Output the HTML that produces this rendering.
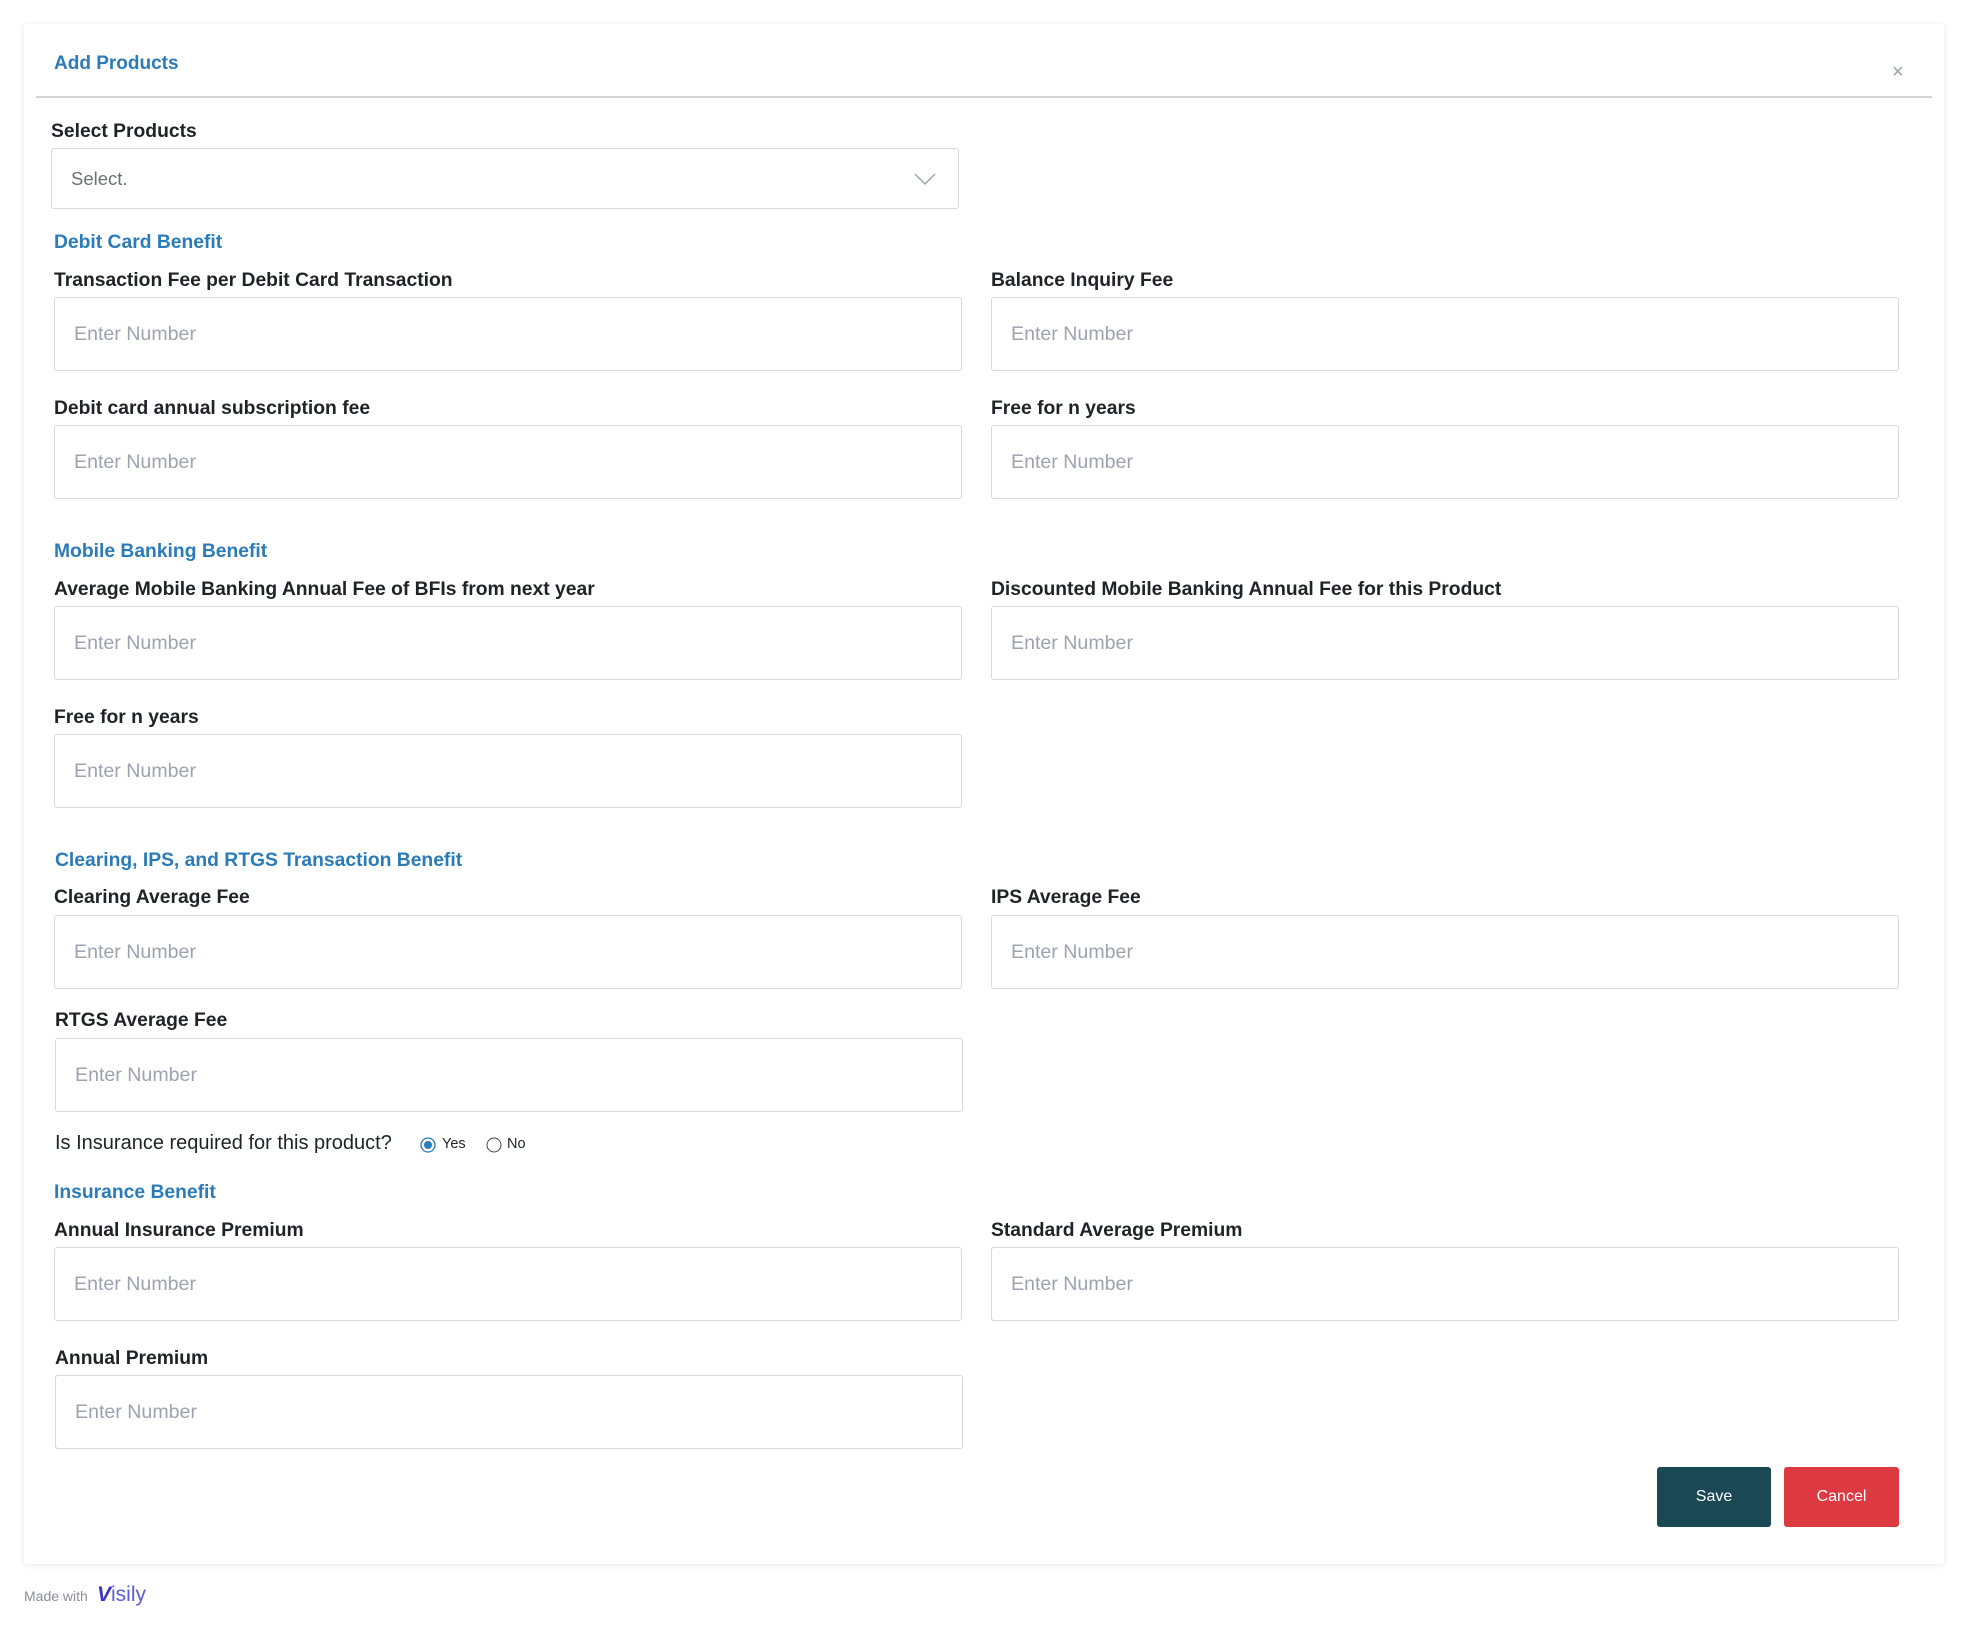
<!DOCTYPE html>
<html><head><meta charset="utf-8"><style>
*{box-sizing:border-box;margin:0;padding:0}
body{width:1968px;height:1628px;background:#fff;font-family:"Liberation Sans",Arial,sans-serif;position:relative;overflow:hidden}
.card{position:absolute;left:24px;top:24px;width:1920px;height:1540px;background:#fff;box-shadow:0 1px 6px rgba(0,0,0,.10)}
.abs{position:absolute}
.title{left:54px;top:53px;font-size:19px;font-weight:bold;color:#2b7bb9}
.x{left:1892px;top:61px;font-size:20px;color:#9aa0a6}
.div{left:36px;top:96px;width:1896px;height:2px;background:#d3d6da}
.lbl{font-size:19.3px;font-weight:bold;color:#1f2328;white-space:nowrap}
.h{font-size:19.3px;font-weight:bold;color:#2b7bb9;white-space:nowrap}
.inp{border:1.5px solid #d6d8db;border-radius:3px;height:74px;font-size:19.6px;color:#9ca3af;padding-left:19px;display:flex;align-items:center}
.L{left:54px;width:908px}.R{left:991px;width:908px}
.btn{height:60px;border-radius:3px;color:#fff;font-size:16px;display:flex;align-items:center;justify-content:center;font-weight:500}
</style></head><body>
<div class="card"></div>
<div class="abs title">Add Products</div>
<div class="abs x">×</div>
<div class="abs div"></div>

<div class="abs lbl" style="left:51px;top:121px">Select Products</div>
<div class="abs inp" style="left:51px;top:148px;width:908px;height:61px;color:#6b7075;font-size:18.5px">Select.</div>
<svg class="abs" style="left:914px;top:172px" width="22" height="14"><path d="M1 2 L11 12 L21 2" fill="none" stroke="#a0a4a8" stroke-width="1.5"/></svg>

<div class="abs h" style="left:54px;top:232px">Debit Card Benefit</div>
<div class="abs lbl" style="left:54px;top:270px">Transaction Fee per Debit Card Transaction</div>
<div class="abs lbl" style="left:991px;top:270px">Balance Inquiry Fee</div>
<div class="abs inp L" style="top:297px">Enter Number</div>
<div class="abs inp R" style="top:297px">Enter Number</div>
<div class="abs lbl" style="left:54px;top:398px">Debit card annual subscription fee</div>
<div class="abs lbl" style="left:991px;top:398px">Free for n years</div>
<div class="abs inp L" style="top:425px">Enter Number</div>
<div class="abs inp R" style="top:425px">Enter Number</div>

<div class="abs h" style="left:54px;top:541px">Mobile Banking Benefit</div>
<div class="abs lbl" style="left:54px;top:579px">Average Mobile Banking Annual Fee of BFIs from next year</div>
<div class="abs lbl" style="left:991px;top:579px">Discounted Mobile Banking Annual Fee for this Product</div>
<div class="abs inp L" style="top:606px">Enter Number</div>
<div class="abs inp R" style="top:606px">Enter Number</div>
<div class="abs lbl" style="left:54px;top:707px">Free for n years</div>
<div class="abs inp L" style="top:734px">Enter Number</div>

<div class="abs h" style="left:55px;top:850px">Clearing, IPS, and RTGS Transaction Benefit</div>
<div class="abs lbl" style="left:54px;top:887px">Clearing Average Fee</div>
<div class="abs lbl" style="left:991px;top:887px">IPS Average Fee</div>
<div class="abs inp L" style="top:915px">Enter Number</div>
<div class="abs inp R" style="top:915px">Enter Number</div>
<div class="abs lbl" style="left:55px;top:1010px">RTGS Average Fee</div>
<div class="abs inp" style="left:55px;width:908px;top:1038px">Enter Number</div>

<div class="abs" style="left:55px;top:1132px;font-size:20px;color:#1f2328">Is Insurance required for this product?</div>
<svg class="abs" style="left:419px;top:1136px" width="18" height="18"><circle cx="9" cy="9" r="7" fill="#fff" stroke="#2b7bb9" stroke-width="1.3"/><circle cx="9" cy="9" r="4" fill="#2b7bb9"/></svg>
<div class="abs" style="left:442px;top:1136px;font-size:14.5px;color:#1f2328">Yes</div>
<svg class="abs" style="left:485px;top:1136px" width="18" height="18"><circle cx="9" cy="9" r="7" fill="#fff" stroke="#444" stroke-width="1"/></svg>
<div class="abs" style="left:507px;top:1136px;font-size:14.5px;color:#1f2328">No</div>

<div class="abs h" style="left:54px;top:1182px">Insurance Benefit</div>
<div class="abs lbl" style="left:54px;top:1220px">Annual Insurance Premium</div>
<div class="abs lbl" style="left:991px;top:1220px">Standard Average Premium</div>
<div class="abs inp L" style="top:1247px">Enter Number</div>
<div class="abs inp R" style="top:1247px">Enter Number</div>
<div class="abs lbl" style="left:55px;top:1348px">Annual Premium</div>
<div class="abs inp" style="left:55px;width:908px;top:1375px">Enter Number</div>

<div class="abs btn" style="left:1657px;top:1467px;width:114px;background:#1a4855">Save</div>
<div class="abs btn" style="left:1784px;top:1467px;width:115px;background:#dc3a40">Cancel</div>

<div class="abs" style="left:24px;top:1588px;font-size:14px;color:#8a8f99">Made with</div>
<div class="abs" style="left:97px;top:1583px;font-size:21px;color:#5b5ce0;font-weight:500"><span style="color:#3a35c8;font-weight:bold;font-style:italic">V</span>isily</div>
</body></html>
